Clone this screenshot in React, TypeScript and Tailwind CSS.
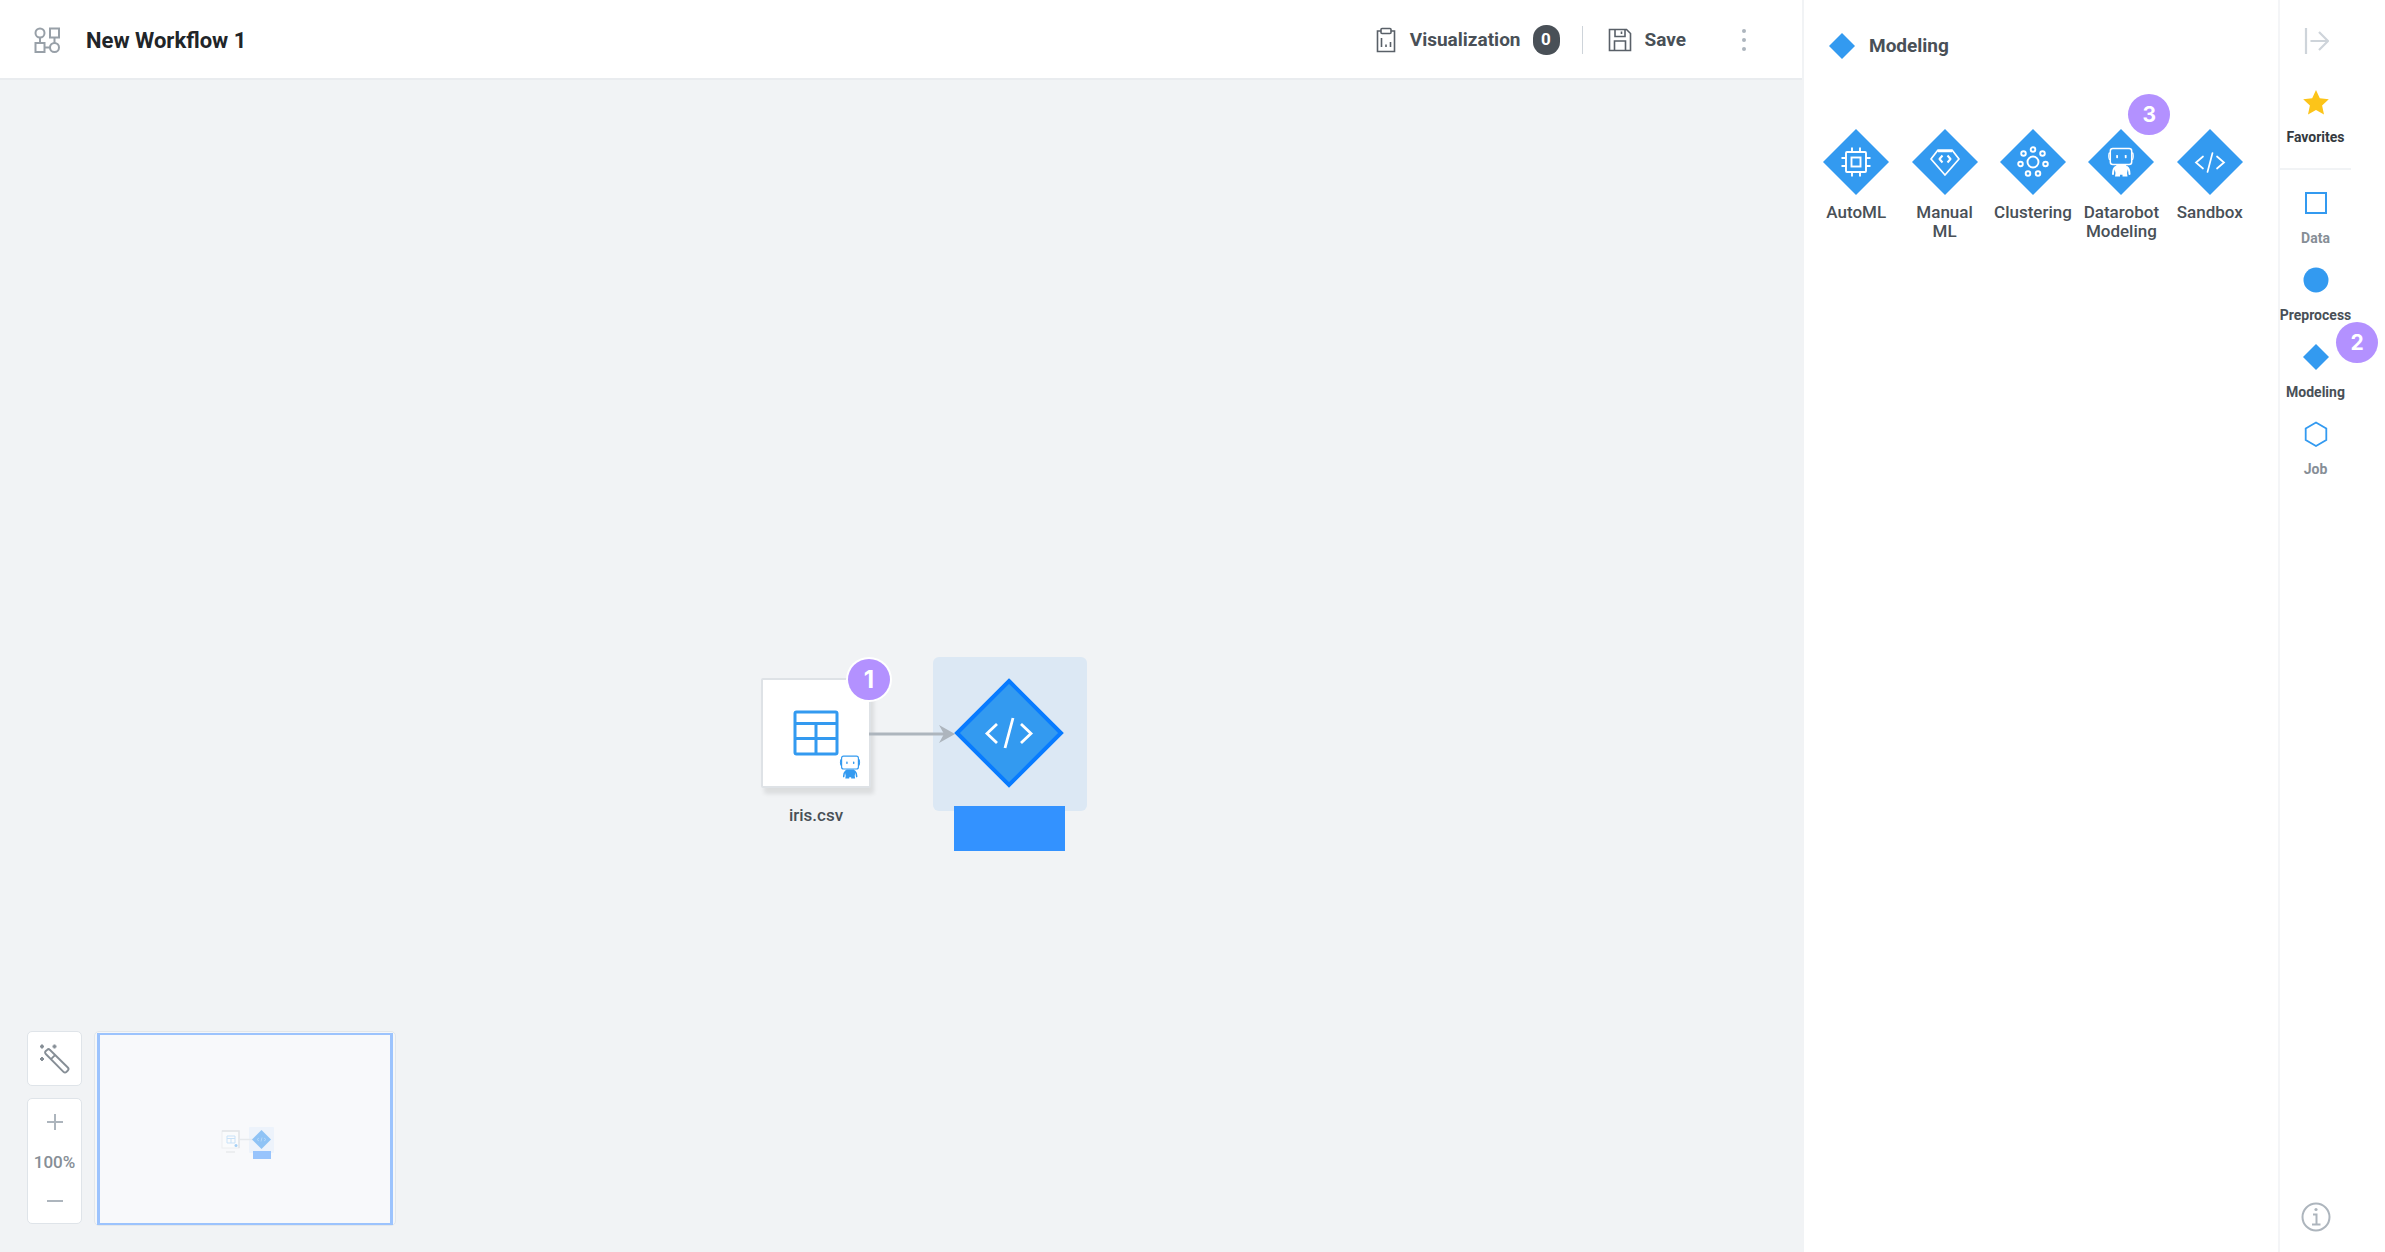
import type { ReactNode } from "react";

function RobotGlyph() {
  return (
    <g>
      <rect x="4.300" y="1.500" width="21.400" height="16" rx="2.500" fill="none" stroke="currentColor" strokeWidth="1.500" />
      <path d="M3.600 5.500Q2.800 6.500 2.800 9t.8 4M26.400 5.500q.8 1 .8 3.500t-.8 4" fill="none" stroke="currentColor" strokeWidth="1.300" />
      <rect x="10.200" y="8" width="1.800" height="3.200" rx=".6" fill="currentColor" />
      <rect x="18.800" y="8" width="1.800" height="3.200" rx=".6" fill="currentColor" />
      <path d="M10.500 18h9.500l2 3.500-1 4.500.5 3.500h-5v-1.800h-2.500v1.800H9l.5-3.500-1-4.500z" fill="currentColor" />
      <path d="M9.500 20Q7 22 7 27M21 20q2.500 2 2.500 7" fill="none" stroke="currentColor" strokeWidth="2" strokeLinecap="round" />
    </g>
  );
}

function CodeGlyph() {
  return (
    <path d="M8 9.500L1 15.500l7 6M22 9.500l7 6-7 6M17.500 6l-5 19" fill="none" stroke="currentColor" strokeWidth="1.700" strokeLinecap="round" />
  );
}

function ChipGlyph() {
  return (
    <g fill="none" stroke="currentColor" strokeWidth="1.900">
      <rect x="5" y="5" width="20" height="20" rx="1" />
      <rect x="10.500" y="10.500" width="9" height="9" />
      <path d="M11 5V.5M19 5V.5M11 25v4.500M19 25v4.500M5 11H.5M5 19H.5M25 11h4.500M25 19h4.500" />
    </g>
  );
}

function GemGlyph() {
  return (
    <g fill="none" stroke="currentColor" strokeWidth="1.700" strokeLinejoin="round">
      <path d="M8 3h14l7 9L15 28 1 12zM8 4.500h14" />
      <path d="M12.500 8.500L9.500 12l3 3.500M17.500 8.500l3 3.500-3 3.500" strokeWidth="2" />
    </g>
  );
}

function ClusterGlyph() {
  const dots = [
    [15, 2.5],
    [24.5, 6.5],
    [27.5, 17],
    [20, 26.5],
    [10, 26.5],
    [2.5, 17],
    [5.5, 6.5],
  ];
  return (
    <g fill="none" stroke="currentColor" strokeWidth="1.900">
      <circle cx="15" cy="15" r="5.500" />
      {dots.map(([x, y]) => (
        <circle key={`${x}-${y}`} cx={x} cy={y} r="2.300" />
      ))}
    </g>
  );
}

function Marker({ children, ring = false }: { children: ReactNode; ring?: boolean }) {
  return (
    <span
      className={`flex h-[41px] w-[42px] items-center justify-center rounded-[50%] bg-[#b391ff] font-[Inter,sans-serif] font-bold text-white ${
        ring ? "text-2xl shadow-[0_0_0_2px_#fff]" : "text-[21px]"
      }`}
    >
      {children}
    </span>
  );
}

function Header() {
  return (
    <header className="flex h-20 shrink-0 items-center border-b-2 border-[#e9ecef] bg-white pl-[34px] pr-[46px] pt-[2px]">
      <svg width="26" height="26" viewBox="0 0 26 26" fill="none" stroke="#98a0a8" strokeWidth="2" aria-hidden="true">
        <circle cx="6" cy="6" r="4.500" />
        <rect x="16" y="1.500" width="9" height="9" />
        <rect x="1.500" y="16" width="9" height="9" />
        <circle cx="20.500" cy="20.500" r="4.500" />
        <path d="M6 10.500V16M20.500 10.500V16M10.500 20.500H16" />
      </svg>
      <h1 className="ml-[26px] flex-1 text-[22px] font-bold text-[#212529]">New Workflow 1</h1>
      <button type="button" className="flex items-center text-[19px] font-bold text-[#495057]">
        <svg width="20" height="26" viewBox="0 0 20 26" fill="none" stroke="#596068" strokeWidth="1.600" aria-hidden="true">
          <path d="M5 4H1.500v20.500h17V4H15" />
          <rect x="5" y="1.500" width="10" height="5" rx="1" />
          <path d="M5.500 11v9M10 17.500V20M14.500 15v5" />
        </svg>
        <span className="ml-[14px]">Visualization</span>
        <span className="ml-3 flex h-[30px] w-[27px] items-center justify-center rounded-[13px] bg-[#495057] text-[17px] font-bold text-white">
          0
        </span>
      </button>
      <span className="mx-[22px] h-7 w-px bg-[#ced4da]" />
      <button type="button" className="ml-[3px] flex items-center text-[19px] font-bold text-[#495057]">
        <svg width="24" height="24" viewBox="0 0 24 24" fill="none" stroke="#596068" strokeWidth="1.600" aria-hidden="true">
          <path d="M1.500 1.500h17l4 4v17h-21z" />
          <path d="M7 1.500v7h10v-7M13.500 3.500v2.500M6.500 22.500V13h11v9.500" />
        </svg>
        <span className="ml-[13px]">Save</span>
      </button>
      <button type="button" aria-label="More" className="ml-[46px] flex w-6 justify-center">
        <svg width="6" height="24" viewBox="0 0 6 24" fill="#adb5bd" aria-hidden="true">
          <circle cx="3" cy="3" r="2" />
          <circle cx="3" cy="12" r="2" />
          <circle cx="3" cy="21" r="2" />
        </svg>
      </button>
    </header>
  );
}

function TableIcon() {
  return (
    <svg width="46" height="46" viewBox="0 0 46 46" fill="none" stroke="#339af0" strokeWidth="3" aria-hidden="true">
      <rect x="2" y="2" width="42" height="42" rx="1.500" />
      <path d="M2 13.500h42M2 28.500h42M23 13.500V44" />
    </svg>
  );
}

function Canvas() {
  return (
    <main className="relative flex-1 overflow-hidden bg-[#f1f3f5]">
      <div className="absolute left-[933px] top-[577px] h-[154px] w-[154px] rounded-md bg-[#dce8f4]" />
      <div className="absolute left-[761px] top-[598px] flex h-[110px] w-[110px] items-center justify-center rounded-xs border-2 border-[#dee2e6] bg-white shadow-[3px_6px_4px_rgba(0,0,0,0.09)]">
        <TableIcon />
        <svg className="absolute bottom-[7px] right-[8px] text-[#339af0]" width="22" height="24" viewBox="1 0 28 30" preserveAspectRatio="none" aria-hidden="true">
          <RobotGlyph />
        </svg>
      </div>
      <p className="absolute left-[761px] top-[723px] w-[110px] text-center text-[17px] leading-6 font-medium text-[#495057]">iris.csv</p>
      <svg className="absolute left-[869px] top-[640px]" width="90" height="28" viewBox="0 0 90 28" aria-hidden="true">
        <path d="M0 14h76" stroke="#adb5bd" strokeWidth="3" />
        <path d="M70 5l16 9-16 9 5-9z" fill="#adb5bd" />
      </svg>
      <svg className="absolute left-[954px] top-[598px]" width="110" height="110" viewBox="0 0 110 110" aria-hidden="true">
        <path d="M55 3l52 52-52 52L3 55z" fill="#339af0" stroke="#087bff" strokeWidth="4" />
        <path d="M43 46L33 55.500l10 9.500M67 46l10 9.500L67 65M59 40l-8 30" fill="none" stroke="#fff" strokeWidth="2.800" />
      </svg>
      <div className="absolute left-[954px] top-[726px] h-[45px] w-[111px] bg-[#3392ff]" />
      <div className="absolute left-[848px] top-[579px]">
        <Marker ring>1</Marker>
      </div>

      <div className="absolute bottom-[26px] left-[27px] flex gap-3">
        <div className="flex flex-col gap-3">
          <button type="button" aria-label="Auto arrange" className="flex h-[55px] w-[55px] items-center justify-center rounded-[5px] border border-[#dfe4e9] bg-white">
            <svg width="30" height="30" viewBox="0 0 30 30" fill="none" stroke="#868e96" strokeWidth="1.900" strokeLinejoin="round" aria-hidden="true">
              <path d="M9.800 5.800l18 17.700q1.500 1.500 0 3l-1.300 1.300q-1.500 1.500-3 0L5.800 10q-1.500-1.500 0-3l1.500-1.300q1.300-1.200 2.500.1zM11 15.200l4.500-4.500" />
              <path d="M2 .5v4M0 2.500h4M14.500.5v4M12.500 2.500h4M2 13v4M0 15h4" strokeWidth="2" />
            </svg>
          </button>
          <div className="flex h-[126px] w-[55px] flex-col items-center justify-between rounded-[5px] border border-[#dfe4e9] bg-white pb-3 pt-[13px]">
            <button type="button" aria-label="Zoom in" className="flex size-5 items-center justify-center">
              <svg width="16" height="16" viewBox="0 0 16 16" stroke="#adb5bd" strokeWidth="2" aria-hidden="true">
                <path d="M0 8h16M8 0v16" />
              </svg>
            </button>
            <span className="text-[17px] leading-6 font-medium text-[#868e96]">100%</span>
            <button type="button" aria-label="Zoom out" className="flex size-5 items-center justify-center">
              <svg width="16" height="16" viewBox="0 0 16 16" stroke="#adb5bd" strokeWidth="2" aria-hidden="true">
                <path d="M0 8h16" />
              </svg>
            </button>
          </div>
        </div>
        <div className="w-[302px] rounded-[5px] border border-[#e3e7ea] bg-[#f5f7f9] px-[2px] pt-px">
          <div className="h-full border-x-[3px] border-y-2 border-[#9cc3fd] bg-[#f8f9fb]">
            <svg className="h-full w-full" viewBox="0 0 290 188" aria-hidden="true">
              <rect x="149" y="92" width="25" height="26" rx="1" fill="#edf3fb" />
              <rect x="122" y="96" width="17" height="17" fill="#fafbfc" stroke="#eceef0" />
              <path d="M122 96h17v17" fill="none" stroke="#e2e5e8" strokeWidth="1.500" />
              <path d="M127 101h8v7h-8zM127 103.500h8M131 103v5" fill="none" stroke="#c9e2f8" />
              <circle cx="136" cy="110.500" r="1.500" fill="#a5d0f6" />
              <path d="M126 117h9" stroke="#e8eaed" strokeWidth="1.500" />
              <path d="M140 104.500h13" stroke="#e6e9ec" strokeWidth="1.500" />
              <path d="M161.500 95l9.500 9.500-9.500 9.500-9.500-9.500z" fill="#8fc3f5" />
              <path d="M159 103l-2 1.500 2 1.500M164 103l2 1.500-2 1.500M162 102.500l-1 4" fill="none" stroke="#b4d7f8" />
              <rect x="153" y="116" width="18" height="8" fill="#98c4fc" />
            </svg>
          </div>
        </div>
      </div>
    </main>
  );
}

const tools = [
  { label: "AutoML", glyph: <ChipGlyph /> },
  { label: "Manual ML", glyph: <GemGlyph /> },
  { label: "Clustering", glyph: <ClusterGlyph /> },
  { label: "Datarobot Modeling", glyph: <RobotGlyph />, marker: "3" },
  { label: "Sandbox", glyph: <CodeGlyph /> },
];

function Panel() {
  return (
    <aside className="w-[476px] shrink-0 border-l-2 border-[#f1f3f5] bg-white pl-2 pr-6 pt-8">
      <h2 className="flex h-7 items-center gap-[14px] pl-[17px] text-[19px] font-bold text-[#495057]">
        <svg width="26" height="26" viewBox="0 0 26 26" fill="#339af0" aria-hidden="true">
          <path d="M13 0l13 13-13 13L0 13z" />
        </svg>
        Modeling
      </h2>
      <div className="mt-[69px] grid grid-cols-5">
        {tools.map((tool) => (
          <button key={tool.label} type="button" className="relative flex flex-col items-center text-[17px] leading-[19px] font-medium text-[#495057]">
            <svg width="66" height="66" viewBox="0 0 66 66" className="text-white" aria-hidden="true">
              <path d="M33 0l33 33-33 33L0 33z" fill="#339af0" />
              <g transform="translate(18 18)">{tool.glyph}</g>
            </svg>
            <span className="mt-2 w-20">{tool.label}</span>
            {tool.marker && (
              <span className="absolute -top-[35px] left-[51px]">
                <Marker>{tool.marker}</Marker>
              </span>
            )}
          </button>
        ))}
      </div>
    </aside>
  );
}

const categories = [
  { label: "Data", tone: "text-[#868e96]", shape: <rect x="3" y="3" width="20" height="20" fill="none" stroke="#339af0" strokeWidth="2" /> },
  { label: "Preprocess", tone: "text-[#495057]", shape: <circle cx="13" cy="13" r="12.500" fill="#339af0" /> },
  { label: "Modeling", tone: "text-[#495057]", marker: "2", shape: <path d="M13 0l13 13-13 13L0 13z" fill="#339af0" /> },
  { label: "Job", tone: "text-[#868e96]", shape: <path d="M13 1.500l10.300 6v11.500L13 25 2.700 19V7.500z" fill="none" stroke="#339af0" strokeWidth="1.800" /> },
];

function Rail() {
  return (
    <nav className="flex w-[107px] shrink-0 flex-col border-l-2 border-[#f4f5f7] bg-white pr-[34px] text-sm leading-4 font-medium">
      <button type="button" aria-label="Collapse" className="flex justify-center pt-7">
        <svg width="26" height="26" viewBox="0 0 26 26" fill="none" stroke="#ced4da" strokeWidth="2.200" aria-hidden="true">
          <path d="M3 0v26M7.500 13H25M16 4l9 9-9 9" />
        </svg>
      </button>
      <button type="button" className="mt-[35px] flex flex-col items-center text-[#343a40]">
        <svg width="26" height="26" viewBox="0 0 26 26" fill="#fcc419" aria-hidden="true">
          <path d="M13 1l3.800 8.300 9 1-6.700 6.200 1.900 8.900-8-4.500-8 4.500 1.900-8.900L.2 10.300l9-1z" />
        </svg>
        <span className="mt-[14px] font-bold">Favorites</span>
      </button>
      <div className="mt-[23px] h-[2px] bg-[#f1f3f5]" />
      <div className="mt-5 flex flex-col gap-[21px]">
        {categories.map((c) => (
          <button key={c.label} type="button" className={`relative flex flex-col items-center ${c.tone}`}>
            <svg width="26" height="26" viewBox="0 0 26 26" aria-hidden="true">
              {c.shape}
            </svg>
            <span className="mt-[14px] font-bold">{c.label}</span>
            {c.marker && (
              <span className="absolute -top-[22px] left-[56px]">
                <Marker>{c.marker}</Marker>
              </span>
            )}
          </button>
        ))}
      </div>
      <button type="button" aria-label="Information" className="mb-5 mt-auto flex justify-center">
        <svg width="30" height="30" viewBox="0 0 30 30" fill="none" stroke="#adb5bd" strokeWidth="2" aria-hidden="true">
          <circle cx="15" cy="15" r="13.500" />
          <path d="M12 12.500h3.500V22M11 22.500h8.500" />
          <circle cx="15" cy="7.500" r="1.600" fill="#adb5bd" stroke="none" />
        </svg>
      </button>
    </nav>
  );
}

export default function App() {
  return (
    <div className="flex min-h-screen bg-white font-[Roboto,sans-serif]">
      <div className="flex min-w-0 flex-1 flex-col">
        <Header />
        <Canvas />
      </div>
      <Panel />
      <Rail />
    </div>
  );
}
